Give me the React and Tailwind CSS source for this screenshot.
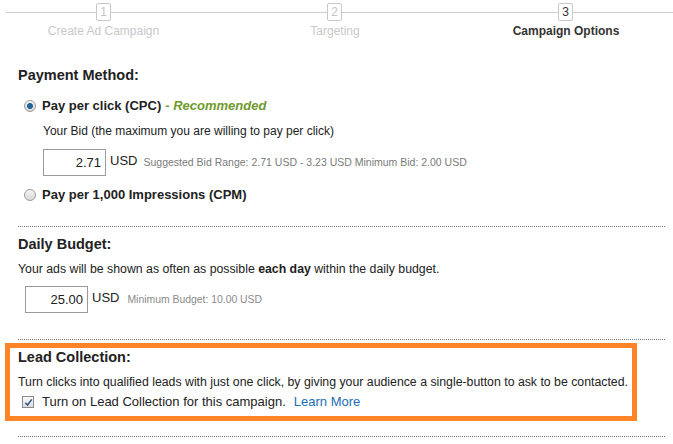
import React from 'react';

const Step = ({ n, active }) => (
  <div
    className={`w-[15px] h-[18px] shrink-0 border border-[#c8c8c8] rounded-[2px] bg-white flex items-center justify-center text-[12px] leading-none ${
      active ? 'text-[#333]' : 'text-[#c4c4c4]'
    }`}
  >
    {n}
  </div>
);

const Radio = ({ checked }) => (
  <span className="w-[12px] h-[12px] shrink-0 rounded-full border border-[#9a9a9a] bg-gradient-to-b from-[#f4f4f4] to-[#d8d8d8] flex items-center justify-center">
    {checked && <span className="w-[6px] h-[6px] rounded-full bg-[#1f6aa5] border border-[#174f7c]" />}
  </span>
);

const Dotted = () => <div className="border-t border-dotted border-[#777] ml-[18px] mr-[8px]" />;

export default function App() {
  return (
    <div className="w-[673px] h-[444px] bg-white overflow-hidden text-[#222]" style={{ fontFamily: '"Liberation Sans", Arial, sans-serif' }}>
      {/* progress steps */}
      <div className="flex items-center pt-[3px]">
        <div className="w-[6px] shrink-0" />
        <div className="w-[90px] h-px bg-[#cfcfcf]" />
        <Step n="1" />
        <div className="w-[216px] h-px bg-[#cfcfcf]" />
        <Step n="2" />
        <div className="w-[216px] h-px bg-[#cfcfcf]" />
        <Step n="3" active />
        <div className="flex-1 h-px bg-[#cfcfcf]" />
      </div>
      <div className="grid grid-cols-[207px_256px_206px] mt-[3px] text-[12px] leading-[14px] text-center">
        <span className="text-[#c8c8c8]">Create Ad Campaign</span>
        <span className="text-[#c8c8c8]">Targeting</span>
        <span className="font-bold text-[#333]">Campaign Options</span>
      </div>

      {/* payment method */}
      <div className="px-[18px]">
        <h3 className="mt-[29px] text-[14.5px] leading-[16px] font-bold">Payment Method:</h3>
        <label className="mt-[14px] flex items-center h-[18px]">
          <span className="ml-[6px] mr-[6px]"><Radio checked /></span>
          <span className="text-[13px] font-bold">Pay per click (CPC)</span>
          <span className="ml-[4px] text-[13px] font-bold italic text-[#6f9a2d]">- Recommended</span>
        </label>
        <p className="mt-[9px] ml-[25px] text-[12px] leading-[14px]">Your Bid (the maximum you are willing to pay per click)</p>
        <div className="mt-[11px] ml-[25px] flex items-center">
          <div className="w-[63px] h-[27px] border border-[#9a9a9a] flex items-center justify-end pr-[4px] text-[13px]">2.71</div>
          <span className="ml-[4px] text-[13px] -mt-[3px]">USD</span>
          <span className="ml-[6px] text-[10.5px] text-[#7a7a7a]">Suggested Bid Range: 2.71 USD - 3.23 USD Minimum Bid: 2.00 USD</span>
        </div>
        <label className="mt-[10px] flex items-center h-[18px]">
          <span className="ml-[6px] mr-[6px]"><Radio /></span>
          <span className="text-[13px] font-bold">Pay per 1,000 Impressions (CPM)</span>
        </label>
      </div>

      <div className="mt-[22px]"><Dotted /></div>

      {/* daily budget */}
      <div className="px-[18px]">
        <h3 className="mt-[9px] text-[14.5px] leading-[16px] font-bold">Daily Budget:</h3>
        <p className="mt-[10px] text-[12.3px] leading-[14px]">
          Your ads will be shown as often as possible <b>each day</b> within the daily budget.
        </p>
        <div className="mt-[10px] ml-[7px] flex items-center">
          <div className="w-[63px] h-[27px] border border-[#9a9a9a] flex items-center justify-end pr-[4px] text-[13px]">25.00</div>
          <span className="ml-[4px] text-[13px] -mt-[3px]">USD</span>
          <span className="ml-[8px] text-[10.4px] text-[#8a8a8a]">Minimum Budget: 10.00 USD</span>
        </div>
      </div>

      <div className="mt-[26px]"><Dotted /></div>

      {/* lead collection */}
      <div className="mt-[3px] ml-[5px] w-[632px] border-[5px] border-[#ff8427] pl-[8px] pt-px pb-[6px]">
        <h3 className="text-[14.5px] leading-[16px] font-bold">Lead Collection:</h3>
        <p className="mt-[10px] text-[12.3px] leading-[14px]">
          Turn clicks into qualified leads with just one click, by giving your audience a single-button to ask to be contacted.
        </p>
        <label className="mt-[5px] flex items-center h-[16px]">
          <span className="ml-[4px] mr-[8px] w-[12px] h-[12px] shrink-0 border border-[#8a8a8a] bg-gradient-to-b from-[#fafafa] to-[#dcdcdc] flex items-center justify-center">
            <svg viewBox="0 0 10 10" className="w-[9px] h-[9px]">
              <path d="M1.5 5.2 L4 7.8 L8.6 1.6" fill="none" stroke="#2c4f8c" strokeWidth="1.6" />
            </svg>
          </span>
          <span className="text-[13px]">Turn on Lead Collection for this campaign.</span>
          <span className="ml-[8px] text-[13px] text-[#1a6db3]">Learn More</span>
        </label>
      </div>

      <div className="mt-[15px]"><Dotted /></div>
    </div>
  );
}
